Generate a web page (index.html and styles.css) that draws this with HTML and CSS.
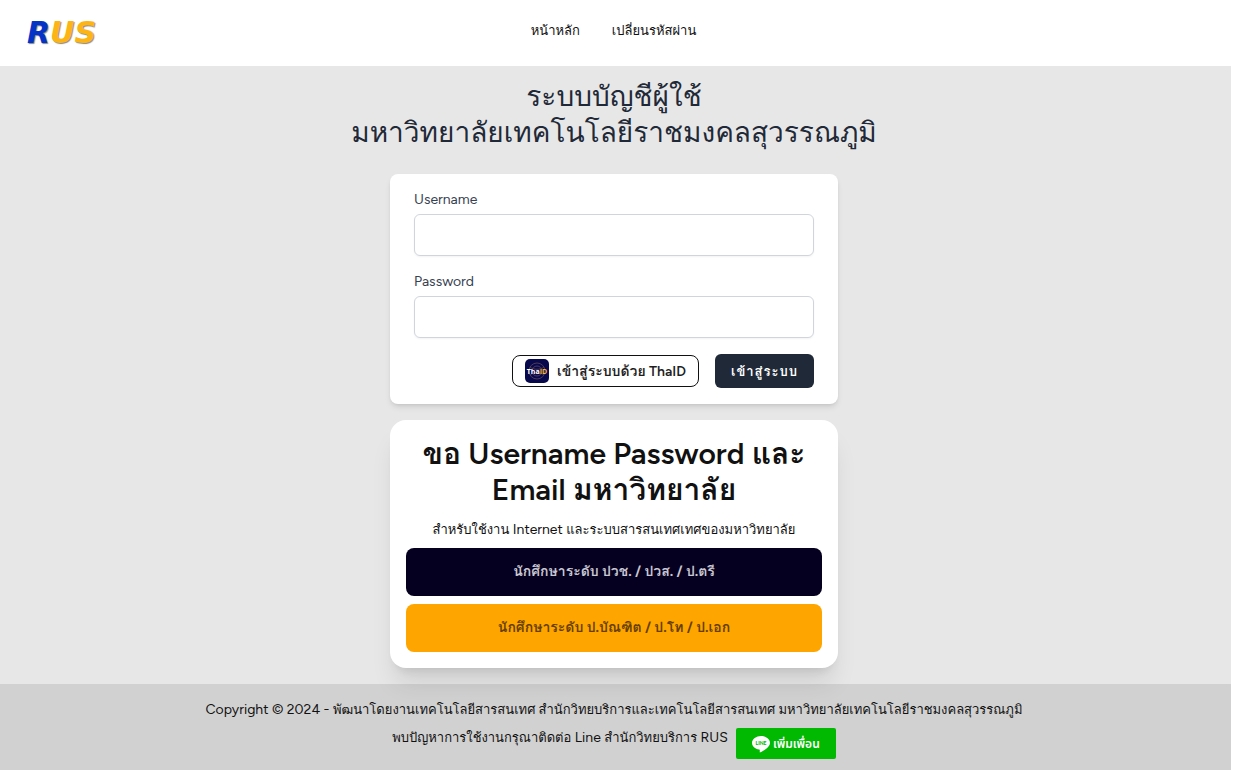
FILE: index.html
```html
<!DOCTYPE html>
<html lang="th">
<head>
  <meta charset="UTF-8">
  <meta name="viewport" content="width=device-width, initial-scale=1.0">
  <title>ระบบบัญชีผู้ใช้</title>
  <link rel="stylesheet" href="styles.css">
</head>
<body>

  <header class="navbar">
    <a class="logo" href="#" aria-label="RUS">
      <span class="logo-r">R</span><span class="logo-us">US</span>
    </a>
    <nav class="menu">
      <a href="#">หน้าหลัก</a>
      <a href="#">เปลี่ยนรหัสผ่าน</a>
    </nav>
  </header>

  <main class="content">
    <h1 class="title">ระบบบัญชีผู้ใช้<br>มหาวิทยาลัยเทคโนโลยีราชมงคลสุวรรณภูมิ</h1>

    <form class="login">
      <label for="username">Username</label>
      <input type="text" id="username" name="username">

      <label for="password">Password</label>
      <input type="password" id="password" name="password">

      <div class="actions">
        <button type="button" class="btn-thaid">
          <svg width="24" height="24" viewBox="0 0 24 24" aria-hidden="true">
            <rect width="24" height="24" rx="5" fill="#08094d"/>
            <g fill="none" stroke="#4d3a55" stroke-width="1">
              <circle cx="12" cy="12" r="8"/>
              <circle cx="12" cy="12" r="5"/>
              <path d="M5 8c4 3 10 3 14 0M5 16c4-3 10-3 14 0"/>
            </g>
            <text class="thaid-text" x="12" y="15" text-anchor="middle" fill="#fff">Tha<tspan fill="#fbb034">ID</tspan></text>
          </svg>
          เข้าสู่ระบบด้วย ThaID
        </button>
        <button type="submit" class="btn-login">เข้าสู่ระบบ</button>
      </div>
    </form>

    <section class="request">
      <h2><span class="th">ขอ</span> Username Password <span class="th">และ</span> Email <span class="th">มหาวิทยาลัย</span></h2>
      <p><span class="th">สำหรับใช้งาน</span> Internet <span class="th">และระบบสารสนเทศเทศของมหาวิทยาลัย</span></p>
      <button type="button" class="btn btn-navy">นักศึกษาระดับ ปวช. / ปวส. / ป.ตรี</button>
      <button type="button" class="btn btn-orange">นักศึกษาระดับ ป.บัณฑิต / ป.โท / ป.เอก</button>
    </section>
  </main>

  <footer class="footer">
    <p>Copyright © 2024 - <span class="th">พัฒนาโดยงานเทคโนโลยีสารสนเทศ สำนักวิทยบริการและเทคโนโลยีสารสนเทศ มหาวิทยาลัยเทคโนโลยีราชมงคลสุวรรณภูมิ</span></p>
    <div class="contact">
      <p><span class="th">พบปัญหาการใช้งานกรุณาติดต่อ</span> Line <span class="th">สำนักวิทยบริการ</span> RUS</p>
      <a class="line-btn" href="#">
        <svg width="18" height="18" viewBox="0 0 18 18" aria-hidden="true">
          <path fill="#fff" d="M9 1C4.300 1 0 4 0 7.800c0 3.400 3 6.200 7.200 6.700.9.200.6 1 .5 2.500 0 .6.400.5.800.3C11 16 18 12.400 18 7.800 18 4 13.700 1 9 1z"/>
          <text class="line-text" x="9" y="10" text-anchor="middle" fill="#00b900">LINE</text>
        </svg>
        เพิ่มเพื่อน
      </a>
    </div>
  </footer>

</body>
</html>
```
FILE: styles.css
```css
* {
  box-sizing: border-box;
}

body {
  margin: 0 2px 0 0;
  min-height: 100vh;
  display: flex;
  flex-direction: column;
  font-family: Figtree, Lato, Tahoma, Loma, Waree, "Noto Sans Thai Looped", "Noto Looped Thai", Garuda, Umpush, "Noto Sans Thai", "Noto Sans", sans-serif;
  font-size: 14px;
  line-height: 20px;
  color: #111;
  background-color: #fff;
}

h1, h2, p {
  margin: 0;
  font-weight: 400;
}

a {
  color: inherit;
  text-decoration: none;
}

button {
  font-family: inherit;
  cursor: pointer;
}

/* Thai runs inside Latin text */
.th {
  font-size: 13px;
}

.navbar {
  height: 66px;
  padding: 0 31px 0 27px;
  display: grid;
  grid-template-columns: 1fr auto 1fr;
  align-items: center;
}

.logo {
  font-family: "DejaVu Sans", sans-serif;
  font-size: 30px;
  font-weight: bold;
  font-style: italic;
  line-height: 36px;
  text-shadow: 1px 1px 1px #888;
  display: flex;
}

.logo-r {
  color: #0433c8;
}

.logo-us {
  color: #fdb515;
}

.menu {
  padding-bottom: 4px;
  display: flex;
  gap: 32px;
  font-size: 13px;
}

.content {
  flex: 1;
  padding: 12px 19px 16px 16px;
  display: flex;
  flex-direction: column;
  align-items: center;
  background-color: #e7e7e7;
}

.title {
  font-size: 28px;
  line-height: 36px;
  text-align: center;
  color: #1f2937;
}

/* Login card */
.login {
  width: 100%;
  max-width: 448px;
  margin-top: 24px;
  padding: 16px 24px;
  background-color: #fff;
  border-radius: 8px;
  box-shadow: 0 4px 6px -1px rgba(0, 0, 0, 0.1), 0 2px 4px -2px rgba(0, 0, 0, 0.1);
}

.login label {
  display: block;
  margin-bottom: 4px;
  color: #374151;
}

.login input {
  display: block;
  width: 100%;
  height: 42px;
  margin-bottom: 16px;
  padding: 8px 12px;
  font-size: 16px;
  border: 1px solid #d1d5db;
  border-radius: 6px;
  box-shadow: 0 1px 2px rgba(0, 0, 0, 0.05);
}

.actions {
  display: flex;
  justify-content: flex-end;
  align-items: center;
  gap: 16px;
}

.btn-thaid {
  height: 32px;
  padding: 0 12px;
  display: flex;
  align-items: center;
  gap: 8px;
  font-size: 14px;
  font-weight: 600;
  color: #1f1f1f;
  background-color: #fff;
  border: 1px solid #111;
  border-radius: 8px;
}

.thaid-text {
  font-family: "Open Sans", sans-serif;
  font-size: 7px;
  font-weight: bold;
}

.btn-login {
  height: 34px;
  padding: 0 16px;
  font-size: 13px;
  font-weight: 700;
  letter-spacing: 1px;
  color: #fff;
  background-color: #1f2937;
  border: none;
  border-radius: 6px;
}

/* Account request card */
.request {
  width: 100%;
  max-width: 448px;
  margin-top: 16px;
  padding: 16px;
  display: flex;
  flex-direction: column;
  gap: 8px;
  text-align: center;
  background-color: #fff;
  border-radius: 16px;
  box-shadow: 0 20px 25px -5px rgba(0, 0, 0, 0.1), 0 8px 10px -6px rgba(0, 0, 0, 0.1);
}

.request h2 {
  font-size: 30px;
  font-weight: 600;
  line-height: 36px;
  padding-bottom: 4px;
}

.request h2 .th {
  font-size: 30px;
  font-weight: 700;
}

.btn {
  height: 48px;
  padding-bottom: 3px;
  font-size: 14px;
  font-weight: 700;
  border: none;
  border-radius: 8px;
}

.btn-navy {
  color: #c9c7d3;
  background-color: #05001f;
}

.btn-orange {
  color: #663f00;
  background-color: #ffa500;
}

.footer {
  padding: 16px 19px 11px 16px;
  display: flex;
  flex-direction: column;
  align-items: center;
  gap: 8px;
  text-align: center;
  background-color: rgba(0, 0, 0, 0.18);
}

.contact {
  display: flex;
  gap: 8px;
}

.line-btn {
  width: 100px;
  height: 31px;
  display: flex;
  justify-content: center;
  align-items: center;
  gap: 3px;
  font-family: "Noto Sans Thai", "Noto Sans", sans-serif;
  font-size: 12px;
  font-weight: 600;
  color: #fff;
  background-color: #00b900;
  border-radius: 2px;
}

.line-text {
  font-family: Lato, sans-serif;
  font-size: 5px;
  font-weight: 900;
}
```
